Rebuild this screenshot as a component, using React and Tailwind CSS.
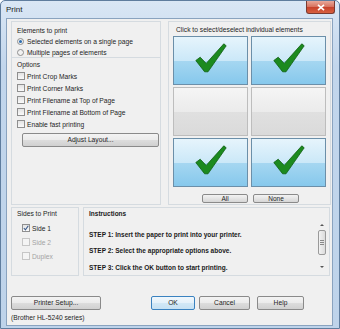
import React from "react";

const font = { fontFamily: '"Liberation Sans", Arial, sans-serif' };

function Tick() {
  return (
    <svg width="32" height="30" viewBox="0 0 32 30">
      <path
        d="M0.8 17.5 L5.2 14.2 L11.2 20.4 L28.8 0.8 L31.2 2.8 L13 28.8 L9.6 28.8 Z"
        fill="#1c8a1f"
        stroke="#0f5e12"
        strokeWidth="0.8"
        strokeLinejoin="round"
      />
    </svg>
  );
}

function Tile({ on }) {
  return (
    <div
      className={
        on
          ? "h-[49px] flex justify-center pt-[6px] border border-[#6b8fa9] bg-[linear-gradient(to_bottom,#e6f4fc_0%,#cbe8f8_50%,#a6d7f1_50%,#86c8ec_100%)]"
          : "h-[49px] border border-[#bdbdbd] bg-[linear-gradient(to_bottom,#f5f5f5_0%,#ebebeb_50%,#e0e0e0_50%,#dadada_100%)]"
      }
    >
      {on && <Tick />}
    </div>
  );
}

function Check({ checked, disabled, label }) {
  return (
    <div className="flex items-center h-[12px]">
      <div
        className={
          "w-[8px] h-[8px] border flex items-center justify-center " +
          (disabled
            ? "border-[#c6c6c6] bg-[#f4f4f4]"
            : "border-[#8f8f8f] bg-[linear-gradient(to_bottom,#e3e3e3,#fafafa)]")
        }
      >
        {checked && (
          <svg width="6" height="6" viewBox="0 0 6 6">
            <path d="M0.8 3 L2.4 4.8 L5.3 0.8" fill="none" stroke="#3b5a8a" strokeWidth="1.1" />
          </svg>
        )}
      </div>
      <span className={"ml-[2px] text-[6.7px] leading-[9px] " + (disabled ? "text-[#a3a3a3]" : "text-[#1e1e1e]")}>
        {label}
      </span>
    </div>
  );
}

function Radio({ on, label }) {
  return (
    <div className="flex items-center h-[11px]">
      <div className="w-[7px] h-[7px] rounded-full border border-[#8f8f8f] bg-[#f1f1f1] flex items-center justify-center">
        {on && <div className="w-[3px] h-[3px] rounded-full bg-[#2f6fb0]" />}
      </div>
      <span className="ml-[3px] text-[6.7px] leading-[9px] text-[#1e1e1e]">{label}</span>
    </div>
  );
}

function Btn({ children, className, focus }) {
  return (
    <div
      className={
        "h-[14px] rounded-[2px] border flex items-center justify-center text-[6.7px] text-[#1e1e1e] " +
        (focus
          ? "border-[#3a82c0] bg-[linear-gradient(to_bottom,#f0f7fc_0%,#e4f1fa_50%,#d2e8f6_50%,#c6e1f3_100%)] "
          : "border-[#8a8a8a] bg-[linear-gradient(to_bottom,#f3f3f3_0%,#ebebeb_50%,#dddddd_50%,#d0d0d0_100%)] ") +
        className
      }
    >
      {children}
    </div>
  );
}

export default function App() {
  return (
    <div
      style={font}
      className="w-[340px] h-[329px] border border-[#5f7d9e] rounded-t-[5px] bg-[linear-gradient(to_bottom,#dae7f5,#c2d6ec_20%,#bed3ea)] overflow-hidden flex flex-col"
    >
      {/* title bar */}
      <div className="h-[17px] flex items-start">
        <span className="ml-[5px] mt-[4px] text-[8px] leading-[10px] text-[#1a1a1a]">Print</span>
        <div className="ml-auto mr-[4px] w-[29px] h-[13px] rounded-b-[3px] border border-t-0 border-[#7a3a30] bg-[linear-gradient(to_bottom,#e8a89a,#d7705c_50%,#c6412b_50%,#d8603f)] flex items-center justify-center">
          <svg width="8" height="7" viewBox="0 0 8 7">
            <path d="M1 0.8 L7 6.2 M7 0.8 L1 6.2" stroke="#fff" strokeWidth="1.6" />
          </svg>
        </div>
      </div>

      {/* client */}
      <div className="ml-[5px] w-[327px] h-[308px] border border-[#8aa3bf] bg-[#f0f0f0] pt-[2px] pl-[4px] flex flex-col">
        <div className="flex h-[184px]">
          {/* left panel */}
          <div className="w-[150px] h-full border border-[#d5dbe0] flex flex-col">
            <div className="h-[36px] border-b border-[#d5dbe0] pl-[5px] pt-[4px]">
              <div className="text-[6.7px] leading-[9px] text-[#1e1e1e]">Elements to print</div>
              <div className="mt-[1px]">
                <Radio on label="Selected elements on a single page" />
                <Radio label="Multiple pages of elements" />
              </div>
            </div>
            <div className="pl-[5px] pt-[2px]">
              <div className="text-[6.7px] leading-[9px] text-[#1e1e1e]">Options</div>
              <div className="mt-[1px]">
                <Check label="Print Crop Marks" />
                <Check label="Print Corner Marks" />
                <Check label="Print Filename at Top of Page" />
                <Check label="Print Filename at Bottom of Page" />
                <Check label="Enable fast printing" />
              </div>
              <Btn className="mt-[3px] ml-[5px] w-[137px]">Adjust Layout...</Btn>
            </div>
          </div>

          {/* right panel */}
          <div className="ml-[7px] w-[163px] h-full border border-[#d5dbe0] flex flex-col">
            <div className="pl-[7px] pt-[3px] text-[6.7px] leading-[9px] text-[#1e1e1e]">
              Click to select/deselect individual elements
            </div>
            <div className="mt-[2px] ml-[4px] w-[153px] grid grid-cols-2 gap-x-[3px] gap-y-[2px]">
              <Tile on />
              <Tile on />
              <Tile />
              <Tile />
              <Tile on />
              <Tile on />
            </div>
            <div className="mt-[7px] flex">
              <div className="ml-[33px] w-[46px] h-[9px] rounded-[2px] border border-[#8a8a8a] bg-[linear-gradient(to_bottom,#f3f3f3,#d6d6d6)] text-[6.5px] leading-[7px] text-center text-[#1e1e1e]">
                All
              </div>
              <div className="ml-[5px] w-[46px] h-[9px] rounded-[2px] border border-[#8a8a8a] bg-[linear-gradient(to_bottom,#f3f3f3,#d6d6d6)] text-[6.5px] leading-[7px] text-center text-[#1e1e1e]">
                None
              </div>
            </div>
          </div>
        </div>

        {/* bottom row */}
        <div className="mt-[2px] flex h-[69px]">
          <div className="w-[68px] h-full border border-[#d5dbe0] pl-[5px] pt-[1px]">
            <div className="text-[6.7px] leading-[9px] text-[#1e1e1e]">Sides to Print</div>
            <div className="mt-[4px] ml-[5px] flex flex-col gap-[2px]">
              <Check checked label="Side 1" />
              <Check disabled label="Side 2" />
              <Check disabled label="Duplex" />
            </div>
          </div>
          <div className="ml-[4px] w-[247px] h-full border border-[#d5dbe0] flex">
            <div className="flex-1 pl-[5px] pt-[1px] font-bold text-[6.5px] leading-[9px] text-[#1a1a1a]">
              <div>Instructions</div>
              <div className="mt-[12px]">STEP 1: Insert the paper to print into your printer.</div>
              <div className="mt-[7px]">STEP 2: Select the appropriate options above.</div>
              <div className="mt-[8px]">STEP 3: Click the OK button to start printing.</div>
            </div>
            <div className="mt-[14px] mr-[2px] w-[10px] h-[48px] flex flex-col items-center">
              <svg width="6" height="6" viewBox="0 0 6 6">
                <path d="M1 4 L3 2 L5 4 Z" fill="#555" />
              </svg>
              <div className="mt-[2px] w-[8px] h-[25px] rounded-[2px] border border-[#9a9a9a] bg-[linear-gradient(to_right,#f2f2f2,#dcdcdc)] flex flex-col items-center justify-center gap-[1px]">
                <div className="w-[4px] h-px bg-[#888]" />
                <div className="w-[4px] h-px bg-[#888]" />
                <div className="w-[4px] h-px bg-[#888]" />
              </div>
              <svg className="mt-auto" width="6" height="6" viewBox="0 0 6 6">
                <path d="M1 2 L3 4 L5 2 Z" fill="#555" />
              </svg>
            </div>
          </div>
        </div>

        {/* footer */}
        <div className="mt-[20px] flex">
          <Btn className="w-[90px]">Printer Setup...</Btn>
          <Btn focus className="ml-[50px] w-[44px]">OK</Btn>
          <Btn className="ml-[4px] w-[51px]">Cancel</Btn>
          <Btn className="ml-[7px] w-[47px]">Help</Btn>
        </div>
        <div className="mt-[3px] text-[6.7px] leading-[9px] text-[#1e1e1e]">(Brother HL-5240 series)</div>
      </div>
    </div>
  );
}
